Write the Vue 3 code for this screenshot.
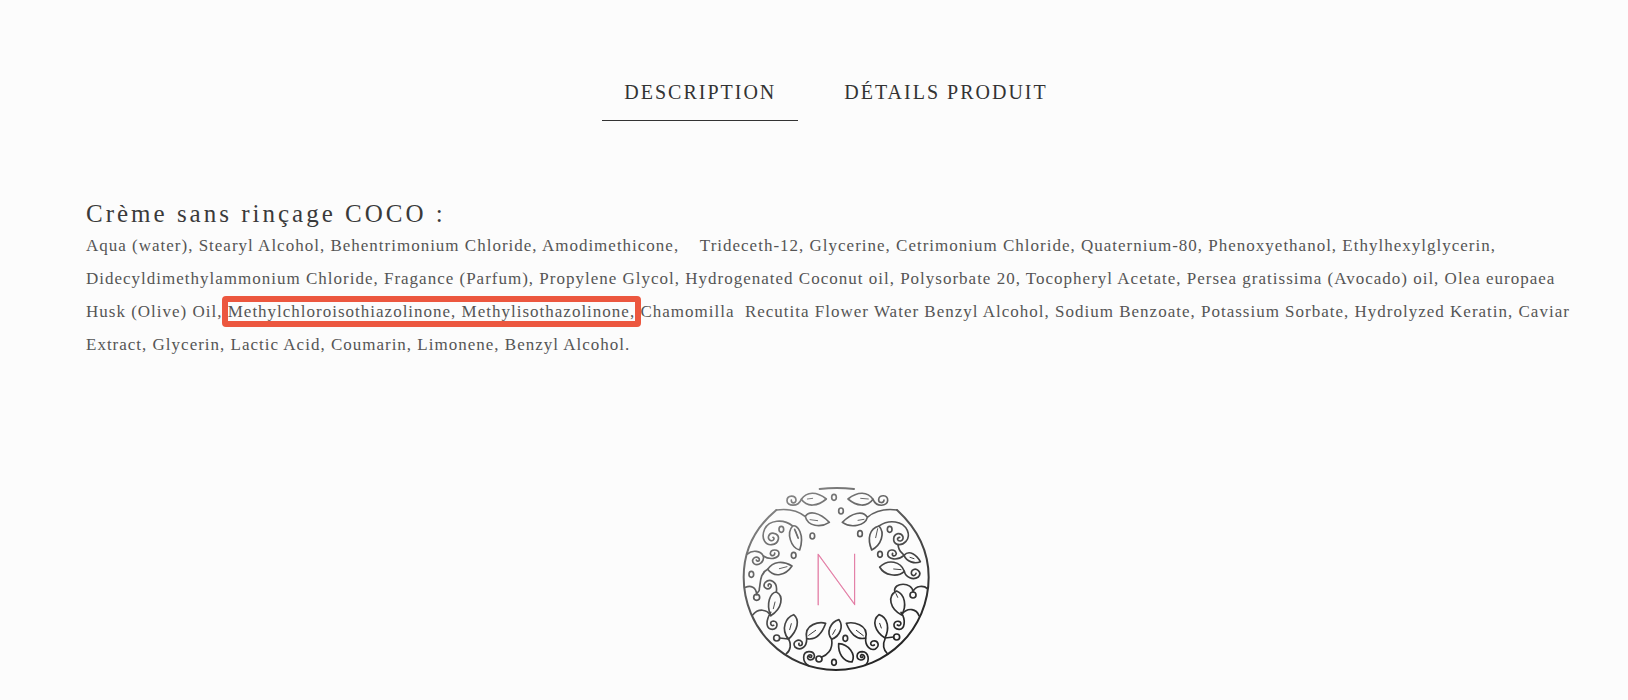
<template>
  <main class="product-info">
    <div class="tabs" role="tablist">
      <button
        v-for="tab in tabs"
        :key="tab.id"
        type="button"
        role="tab"
        class="tab"
        :class="{ active: tab.id === activeTab }"
        :aria-selected="tab.id === activeTab"
        @click="activeTab = tab.id"
      >{{ tab.label }}</button>
    </div>

    <section class="description">
      <h2>Crème sans rinçage COCO :</h2>
      <p>
        Aqua (water), Stearyl Alcohol, Behentrimonium Chloride, Amodimethicone, &nbsp;&nbsp; Trideceth-12, Glycerine,
        Cetrimonium Chloride, Quaternium-80, Phenoxyethanol, Ethylhexylglycerin, Didecyldimethylammonium Chloride,
        Fragance (Parfum), Propylene Glycol, Hydrogenated Coconut oil, Polysorbate 20, Tocopheryl Acetate,
        Persea gratissima (Avocado) oil, Olea europaea Husk (Olive) Oil,
        <mark>Methylchloroisothiazolinone, Methylisothazolinone,</mark>
        Chamomilla&nbsp; Recutita Flower Water Benzyl Alcohol, Sodium Benzoate, Potassium Sorbate,
        Hydrolyzed Keratin, Caviar Extract, Glycerin, Lactic Acid, Coumarin, Limonene, Benzyl Alcohol.
      </p>
    </section>

    <footer class="brand">
      <svg class="logo" viewBox="1 0 606 600" role="img" aria-label="N">
        <defs>
          <linearGradient id="ink" gradientUnits="userSpaceOnUse" x1="130" y1="60" x2="400" y2="520">
            <stop offset="0" stop-color="#858585" />
            <stop offset="0.5" stop-color="#505050" />
            <stop offset="1" stop-color="#262626" />
          </linearGradient>
        </defs>
        <g class="ink">
          <!-- outer ring -->
          <path class="ring" d="M125 90C60 144 27 215 27 292C27 445 150 570 304 570C458 570 582 445 582 292C582 215 548 146 487 90" />
          <path class="ring" d="M255 27Q306 21 358 27" />

          <!-- top sprigs -->
          <path d="M200 58C216 34 246 34 275 57C250 78 218 84 200 58Z" />
          <path d="M200 58C190 82 157 79 157 62C157 44 184 44 184 60C184 72 168 71 170 60" />
          <path d="M415 58C399 34 369 34 340 57C365 78 397 84 415 58Z" />
          <path d="M415 58C426 84 458 78 459 62C460 43 434 43 432 58C431 70 448 71 448 60" />
          <path d="M125 90C155 86 188 90 212 110M212 110C223 91 254 96 284 127C258 144 219 139 212 110Z" />
          <path d="M487 90C457 86 424 90 398 112M398 112C386 90 351 98 323 127C350 146 392 136 398 112Z" />

          <!-- left upper curls -->
          <path d="M174 138C146 115 103 120 90 147C77 177 94 196 111 194C134 191 139 165 118 160C103 156 94 177 109 182C117 184 121 174 115 172" />
          <path d="M174 138C188 132 211 164 195 210C169 204 154 159 174 138ZM180 148L190 173" />
          <path d="M38 222C53 209 78 212 86 228C90 245 71 260 58 251C47 240 62 224 73 235C77 244 67 246 65 240" />
          <path d="M86 228C105 241 132 236 133 221C133 207 108 206 107 221C108 230 122 228 120 219" />
          <path d="M99 268C115 244 144 241 172 258C153 286 119 295 99 268Z" />
          <path d="M99 268C75 280 78 308 74 326C75 339 66 334 66 344M33 322C47 315 65 321 66 344" />
          <circle cx="66" cy="352" r="9" />

          <!-- left lower curls -->
          <path d="M125 336C130 303 104 295 92 307C81 321 98 333 108 322C115 311 98 307 101 318" />
          <path d="M125 336C148 347 143 386 108 407C93 371 107 338 125 336Z" />
          <path d="M54 405C70 385 96 386 108 407M108 397C90 428 96 448 113 448C131 447 131 423 116 423C103 424 108 441 117 436" />
          <path d="M177 404C196 419 190 451 161 478C137 445 154 412 177 404Z" />
          <circle cx="126" cy="474" r="9" />
          <path d="M135 474L161 477M158 472C173 492 167 512 155 521" />

          <!-- bottom leaves -->
          <path d="M273 430C256 425 207 430 216 476C246 482 264 455 273 430Z" />
          <path d="M216 476C217 502 196 514 181 501C170 486 192 474 202 486C207 499 189 500 193 490" />
          <path d="M313 419C327 438 317 468 291 478C273 456 288 426 313 419Z" />
          <path d="M291 478C296 511 275 527 260 532" />
          <circle cx="253" cy="537" r="9" />
          <path d="M222 557C201 545 203 516 222 515C242 514 246 538 227 540C212 538 220 519 231 526C232 533 227 534 224 530" />
          <path d="M312 491C341 493 365 522 352 546C325 545 310 519 312 491Z" />
          <path d="M335 430C353 425 403 432 393 474C365 482 345 457 335 430Z" />
          <path d="M393 474C391 499 408 513 422 507C437 497 430 480 415 483C402 488 410 501 419 495" />
          <path d="M391 556C407 543 402 516 383 515C364 515 362 537 378 540C394 541 393 522 380 524C374 531 380 534 384 531" />

          <!-- right upper curls -->
          <path d="M433 138C464 117 504 123 518 151C530 179 505 197 488 193C472 188 474 164 490 161C507 160 510 180 498 183C487 184 485 173 495 172" />
          <path d="M433 138C452 159 440 195 411 210C397 175 404 146 433 138Z" />
          <path d="M490 193C492 217 502 216 508 226M508 226C487 244 461 237 459 224C459 206 482 206 485 221C482 233 469 227 474 220" />
          <path d="M508 226C524 208 546 225 557 245C540 253 516 245 508 226Z" />
          <path d="M435 261C461 236 498 244 509 274C489 293 449 287 435 261Z" />
          <path d="M509 274C513 292 535 302 551 291C564 276 544 261 533 271C523 285 541 293 544 280" />

          <!-- right lower curls -->
          <path d="M486 333C511 343 517 378 501 405C466 387 456 348 486 333Z" />
          <path d="M480 334C476 306 533 305 535 335M535 335C543 316 568 316 578 326" />
          <circle cx="535" cy="345" r="9" />
          <path d="M501 403C521 379 546 388 553 407M499 397C515 421 510 449 493 448C472 447 474 421 492 424C504 426 498 442 488 435" />
          <path d="M433 404C462 413 464 448 451 474C421 455 410 422 433 404Z" />
          <circle cx="486" cy="471" r="9" />
          <path d="M477 471L451 474M452 474C442 496 447 511 459 522" />
        </g>
        <!-- leaf veins -->
        <path
          class="ink veins"
          d="M218 57L234 55M378 55L401 57M226 119L249 122M370 121L388 118M183 154L191 176M134 266L157 260M121 366L116 386M170 431L165 449M243 451L222 466M302 449L294 463M365 451L386 467M429 146L423 173M526 232L538 236M477 267L499 269M484 341L489 352M435 430L440 444"
        />
        <g class="ink">
          <ellipse v-for="(berry, i) in berries" :key="i" :cx="berry[0]" :cy="berry[1]" rx="7" ry="9" />
        </g>
        <text class="monogram" x="305" y="376" text-anchor="middle">N</text>
      </svg>
    </footer>
  </main>
</template>

<script setup>
import { ref } from 'vue';

const tabs = [
  { id: 'description', label: 'DESCRIPTION' },
  { id: 'details', label: 'DÉTAILS PRODUIT' },
];

const activeTab = ref('description');

// Centres of the small berries between the leaves
const berries = [
  [298, 52], [319, 93], [140, 148], [233, 168], [177, 226], [50, 283],
  [376, 161], [465, 148], [436, 223], [332, 475], [298, 547],
];
</script>

<style>
body {
  background: #fcfcfc;
}
</style>

<style scoped>
.product-info {
  padding: 72px 42px 20px 86px;
  color: #3a3a3a;
  font-family: "Liberation Serif", "Times New Roman", serif;
}

.tabs {
  display: flex;
  justify-content: center;
  gap: 24px;
}

.tab {
  padding: 8px 22px 16px;
  border: 0;
  border-bottom: 1px solid transparent;
  background: none;
  color: #333;
  font-family: inherit;
  font-size: 20px;
  line-height: 24px;
  letter-spacing: 2px;
  cursor: pointer;
}

.tab.active {
  border-bottom-color: #333;
}

.description {
  margin-top: 78px;
}

h2 {
  margin: 0;
  font-size: 25px;
  font-weight: 400;
  line-height: 30px;
  letter-spacing: 3px;
}

p {
  margin: 0;
  color: #555;
  font-size: 17px;
  line-height: 33px;
  letter-spacing: 1px;
}

mark {
  position: relative;
  background: none;
  color: inherit;
}

/* frame laid over the line */
mark::after {
  content: "";
  position: absolute;
  inset: -6px;
  border: 6px solid #ec573f;
  border-radius: 4px;
}

.brand {
  display: flex;
  justify-content: center;
  margin-top: 119px;
}

.logo {
  width: 202px;
  height: 200px;
}

.ink {
  fill: none;
  stroke: url(#ink);
  stroke-width: 5;
  stroke-linecap: round;
  stroke-linejoin: round;
}

.ring {
  stroke-width: 6;
}

.veins {
  stroke-width: 3;
}

.monogram {
  fill: #e0709c;
  stroke: #e0709c;
  stroke-width: 1;
  font-family: Lato, sans-serif;
  font-size: 216px;
  font-weight: 100;
}
</style>
